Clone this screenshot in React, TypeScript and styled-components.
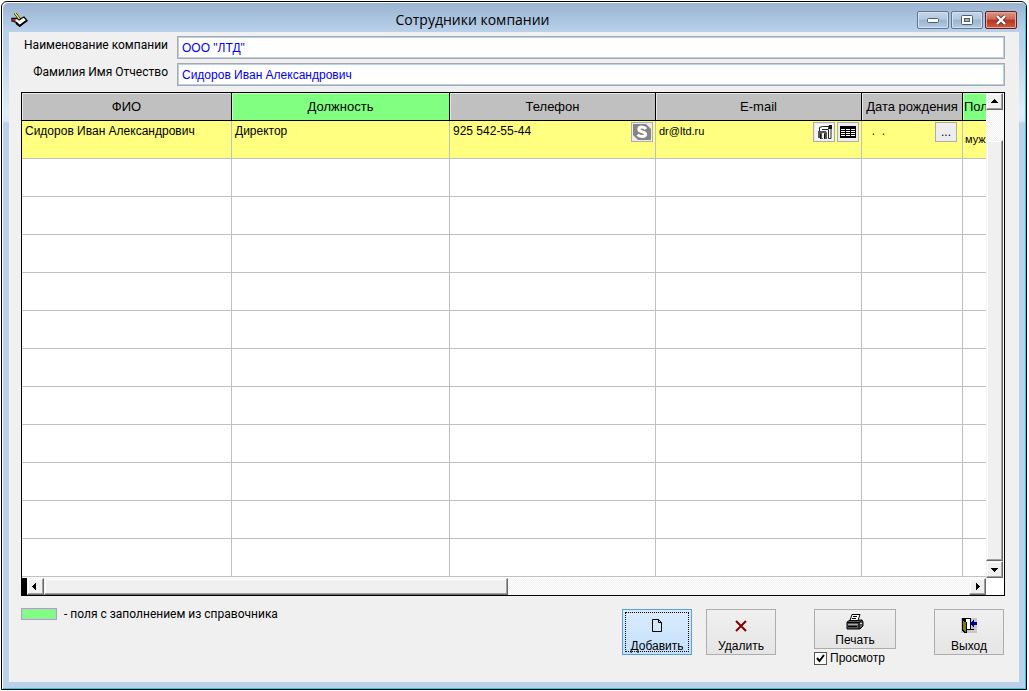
import React from 'react';
import styled, { createGlobalStyle, css } from 'styled-components';

const GlobalStyle = createGlobalStyle`
  * { box-sizing: border-box; }
  body {
    margin: 0;
    background: #fff;
    color: #000;
    font: 12px/16px 'Liberation Sans', Arial, sans-serif;
  }
  button, input { font: inherit; color: inherit; }
  svg { display: block; }
`;

const Desktop = styled.div`
  padding: 1px 2px 1px 1px;
`;

const Frame = styled.div`
  border: 1px solid #000;
  border-radius: 6px 6px 0 0;
  padding: 1px 0 0 1px;
  background: #fff;
`;

const FrameFill = styled.div`
  border-right: 1px solid #2cc8ee;
  border-bottom: 1px solid #2cc8ee;
  border-radius: 5px 5px 0 0;
  padding: 0 6px 6px;
  background: linear-gradient(#9ab4d1 0, #b9d1ea 29px, #b9d1ea 40px, #e2edf8 110px, #dce9f6 118px, #b9d1ea 120px);
`;

const TitleBar = styled.header`
  display: flex;
  align-items: center;
  height: 29px;
  padding: 4px 2px 0 2px;
`;

const Title = styled.h1`
  flex: 1;
  margin: 0;
  text-align: center;
  font: 400 14px/20px 'Open Sans', 'Noto Sans', sans-serif;
`;

const CaptionButtons = styled.div`
  display: flex;
  gap: 2px;
`;

const CaptionButton = styled.button<{ $danger?: boolean }>`
  display: flex;
  align-items: center;
  justify-content: center;
  width: 32px;
  height: 18px;
  padding: 0;
  border: 1px solid ${(p) => (p.$danger ? '#5a2226' : '#5f7590')};
  border-radius: 2px;
  box-shadow: inset 0 0 0 1px ${(p) => (p.$danger ? '#e6a99c' : '#d3e1f0')};
  background: ${(p) =>
    p.$danger
      ? 'linear-gradient(#dc9484 0, #cc6a56 45%, #b5341e 50%, #cc5c40 100%)'
      : 'linear-gradient(#c3d5e8 0, #b4c9df 45%, #9bb4cf 50%, #b3cbe4 100%)'};
`;

const Client = styled.main`
  padding: 4px 14px 16px 12px;
  background: #f0f0f0;
`;

const Form = styled.form`
  display: grid;
  grid-template-columns: 147px 1fr;
  gap: 4px 9px;
`;

const labelFont = css`
  font: 12px/16px Roboto, 'Liberation Sans', sans-serif;
`;

const FieldLabel = styled.label`
  ${labelFont}
  display: flex;
  justify-content: flex-end;
  padding-top: 1px;
  white-space: nowrap;
`;

const Field = styled.input`
  width: 100%;
  height: 23px;
  padding: 0 4px;
  border: 1px solid #a6a9ae;
  outline: 1px solid #b4d0ea;
  outline-offset: -2px;
  border-radius: 0;
  background: #fff;
  color: #0000ff;
`;

const Grid = styled.section`
  display: grid;
  grid-template-columns: minmax(0, 1fr) 18px;
  margin-top: 6px;
  border: 1px solid #000;
  background: #fff;
`;

const TableArea = styled.div`
  overflow: hidden;
  padding-bottom: 1px;
`;

const Table = styled.table`
  width: 100%;
  table-layout: fixed;
  border-collapse: separate;
  border-spacing: 0;
`;

const HeadCell = styled.th<{ $lookup?: boolean }>`
  height: 28px;
  padding: 0;
  border-right: 1px solid #000;
  border-bottom: 1px solid #000;
  box-shadow: inset 1px 1px 0 ${(p) => (p.$lookup ? '#c8ffc8' : '#e8e8e8')};
  background: ${(p) => (p.$lookup ? '#80ff80' : '#c0c0c0')};
  font-size: 13px;
  font-weight: 400;
  white-space: nowrap;
  overflow: hidden;
  &:last-child { border-right: 0; padding-left: 1px; text-align: left; }
`;

const Cell = styled.td<{ $selected?: boolean; $low?: boolean }>`
  height: 38px;
  padding: ${(p) => (p.$low ? '9px 0 0 2px' : '1px 2px 0 3px')};
  border-right: 1px solid #c0c0c0;
  border-bottom: 1px solid #c0c0c0;
  background: ${(p) => (p.$selected ? '#ffff80' : '#fff')};
  vertical-align: top;
  white-space: nowrap;
  overflow: hidden;
  font-size: ${(p) => (p.$low ? '11px' : '12px')};
  line-height: 18px;
  &:last-child { border-right: 0; }
`;

const CellLine = styled.div<{ $small?: boolean; $inset?: boolean }>`
  display: flex;
  gap: 2px;
  padding-right: ${(p) => (p.$inset ? '3px' : '0')};
  font-size: ${(p) => (p.$small ? '11px' : '12px')};
  & > span { flex: 1; }
`;

const CellButton = styled.button`
  display: flex;
  align-items: center;
  justify-content: center;
  width: 22px;
  height: 20px;
  padding: 0;
  border: 1px solid #adadad;
  background: #ededed;
`;

const VScroll = styled.div`
  display: flex;
  flex-direction: column;
  padding-right: 1px;
`;

const HScroll = styled.div`
  display: flex;
`;

const SplitBox = styled.div`
  width: 5px;
  background: #000;
`;

const raised = css`
  border: 1px solid;
  border-color: #f4f4f4 #696969 #696969 #f4f4f4;
  box-shadow: inset -1px -1px 0 #a0a0a0, inset 1px 1px 0 #fff;
  background: #f0f0f0;
`;

const ArrowButton = styled.button`
  ${raised}
  display: flex;
  align-items: center;
  justify-content: center;
  flex: none;
  width: 17px;
  height: 17px;
  padding: 0;
`;

const Thumb = styled.div<{ $grow: number }>`
  ${raised}
  flex: ${(p) => p.$grow} 1 0;
`;

const Track = styled.div<{ $grow: number }>`
  flex: ${(p) => p.$grow} 1 0;
  background: repeating-conic-gradient(#f0f0f0 0 25%, #fff 0 50%) 0 0 / 2px 2px;
`;

const Footer = styled.footer`
  display: flex;
  align-items: flex-start;
  justify-content: space-between;
  padding: 10px 1px 0 0;
`;

const Legend = styled.div`
  ${labelFont}
  display: flex;
  align-items: center;
  gap: 7px;
`;

const Swatch = styled.span`
  width: 36px;
  height: 12px;
  border: 1px solid #a6a9ae;
  outline: 1px solid #a9d6c8;
  outline-offset: -2px;
  background: #80ff80;
`;

const Actions = styled.div`
  display: flex;
  align-items: flex-start;
  gap: 38px;
  padding-top: 3px;
`;

const ActionPair = styled.div`
  display: flex;
  gap: 14px;
`;

const ActionButton = styled.button<{ $wide?: boolean; $focused?: boolean }>`
  display: flex;
  flex-direction: column;
  align-items: center;
  justify-content: flex-end;
  gap: ${(p) => (p.$wide ? '2px' : '5px')};
  width: ${(p) => (p.$wide ? '82px' : '70px')};
  height: ${(p) => (p.$wide ? '40px' : '46px')};
  padding: 0;
  border: 1px solid ${(p) => (p.$focused ? '#569de5' : '#adadad')};
  background: ${(p) => (p.$focused ? 'linear-gradient(#daecfc, #c4e0fc)' : 'linear-gradient(#f0f0f0, #e5e5e5)')};
  outline: ${(p) => (p.$focused ? '1px dotted #000' : '0')};
  outline-offset: -4px;
`;

const PrintGroup = styled.div`
  display: flex;
  flex-direction: column;
  gap: 1px;
`;

const CheckLabel = styled.label`
  display: flex;
  align-items: center;
  gap: 3px;
`;

const Check = styled.input`
  appearance: none;
  width: 13px;
  height: 13px;
  margin: 0;
  border: 1px solid #555;
  background: #fff;
  &:checked {
    background: #fff url("data:image/svg+xml,%3Csvg xmlns='http://www.w3.org/2000/svg' viewBox='0 0 11 11'%3E%3Cpath d='M2 5l2.5 3L9 2' fill='none' stroke='%23000' stroke-width='2'/%3E%3C/svg%3E");
  }
`;

const Arrow = ({ d }: { d: string }) => (
  <svg width="7" height="7" viewBox="0 0 7 7" shapeRendering="crispEdges">
    <path d={d} />
  </svg>
);

const AppIcon = () => (
  <svg width="17" height="14" viewBox="0 0 17 14">
    <path d="M1 5.500h5l2 1 5-2.500 3 3.500-3 2-4 3.500-4-4-4-1z" fill="#fff" stroke="#000" strokeWidth="1.300" />
    <path d="M5 10l3.500 3 4-3 3.500-2.500" fill="none" stroke="#000" strokeWidth="1.800" />
    <path d="M1.500 6h3v2.500h-3z" fill="#b02020" />
    <path d="M4 0l5 7" stroke="#000" strokeWidth="2.600" />
    <path d="M4 0l4.500 6" stroke="#ffe820" strokeWidth="1.500" />
  </svg>
);

const SkypeIcon = () => (
  <svg width="18" height="16" viewBox="0 0 18 16">
    <path d="M0 0h13l5 5v11H5l-5-5z" fill="#858585" />
    <path d="M13 5C11 2.400 5.800 2.400 5.800 5.300c0 3.200 6.800 2 6.800 5 0 3-6 3-8 .400" fill="none" stroke="#fff" strokeWidth="3" />
  </svg>
);

const MailIcon = () => (
  <svg width="18" height="16" viewBox="0 0 18 16">
    <rect width="18" height="16" fill="#f6f6f6" />
    <path d="M4.500 7V3.500l3-1h8.500v12h-2.500V5.500H7" fill="#fff" stroke="#222" />
    <path d="M14 1h3v4h-4z" fill="#111" />
    <path d="M3 7h8l1 2v6h-2v-5H8v5H6v-5H5v4H3z" fill="#555" />
    <path d="M5.500 10v5M9.500 10v5" stroke="#111" />
    <path d="M7 9h2v5H7z" fill="#eee" />
  </svg>
);

const TableIcon = () => (
  <svg width="18" height="14" viewBox="0 0 18 14" shapeRendering="crispEdges">
    <path d="M1 1h16v12H1z" />
    <path d="M2 4h4v1H2zM7 4h4v1H7zM12 4h4v1h-4zM2 6h4v1H2zM7 6h4v1H7zM12 6h4v1h-4zM2 8h4v1H2zM7 8h4v1H7zM12 8h4v1h-4zM2 10h4v1H2zM7 10h4v1H7zM12 10h4v1h-4z" fill="#fff" />
  </svg>
);

const PageIcon = () => (
  <svg width="12" height="14" viewBox="0 0 12 14">
    <path d="M1.500.500h6l3 3v9h-9zM7.500.500v3h3" fill="none" stroke="#000" />
  </svg>
);

const CrossIcon = () => (
  <svg width="12" height="14" viewBox="0 0 12 14">
    <path d="M1 2l10 10M11 2L1 12" stroke="#800000" strokeWidth="2" />
  </svg>
);

const PrinterIcon = () => (
  <svg width="18" height="16" viewBox="0 0 18 16">
    <path d="M1 8l3-2h12l1 2v4l-3 3H1z" fill="#555" stroke="#000" />
    <path d="M6 .500h8l-2 6H4z" fill="#fff" stroke="#000" />
    <path d="M7 2.500h4M6 4.500h4" stroke="#000" />
    <path d="M1 8.500h12l3-2M13 9v6M2 12.500h9" fill="none" stroke="#000" />
    <path d="M2 10.500h10" stroke="#aaa" />
    <path d="M14 9.500h2" stroke="#ddd" />
  </svg>
);

const ExitIcon = () => (
  <svg width="16" height="15" viewBox="0 0 16 15" shapeRendering="crispEdges">
    <path d="M0 0h16v15H0z" fill="#c8c8c8" />
    <path d="M1 0h9v12H1z" />
    <path d="M5 1h4v10H5z" fill="#fff" />
    <path d="M1 1l4 3v11l-4-3z" fill="#808000" stroke="#000" strokeWidth="1" />
    <path d="M9 11h4v1H9z" />
    <path d="M9 5l4-4v3h3v3h-3v3z" fill="#000090" />
  </svg>
);

interface Column {
  title: string;
  width?: number;
  lookup?: boolean;
}

const columns: Column[] = [
  { title: 'ФИО', width: 210 },
  { title: 'Должность', width: 218, lookup: true },
  { title: 'Телефон', width: 206 },
  { title: 'E-mail', width: 206 },
  { title: 'Дата рождения', width: 101 },
  { title: 'Пол', lookup: true },
];

const emptyRows = Array.from({ length: 11 }, (_, i) => i);

export default function App() {
  return (
    <Desktop>
      <GlobalStyle />
      <Frame>
        <FrameFill>
          <TitleBar>
            <AppIcon />
            <Title>Сотрудники компании</Title>
            <CaptionButtons>
              <CaptionButton aria-label="Свернуть">
                <svg width="12" height="6" viewBox="0 0 12 6"><rect x=".5" y="1.500" width="11" height="4" rx="1" fill="#fff" stroke="#4c5a6c" /></svg>
              </CaptionButton>
              <CaptionButton aria-label="Развернуть">
                <svg width="12" height="10" viewBox="0 0 12 10"><rect x=".5" y=".5" width="11" height="9" rx="1" fill="#fff" stroke="#4c5a6c" /><rect x="3.500" y="3.500" width="5" height="3" fill="#9bb4cf" stroke="#4c5a6c" /></svg>
              </CaptionButton>
              <CaptionButton $danger aria-label="Закрыть">
                <svg width="12" height="10" viewBox="0 0 12 10"><path d="M2 1l8 8M10 1L2 9" stroke="#5a3038" strokeWidth="4" /><path d="M2 1l8 8M10 1L2 9" stroke="#fff" strokeWidth="2.400" /></svg>
              </CaptionButton>
            </CaptionButtons>
          </TitleBar>
          <Client>
            <Form>
              <FieldLabel htmlFor="company">Наименование компании</FieldLabel>
              <Field id="company" defaultValue={'ООО "ЛТД"'} />
              <FieldLabel htmlFor="person">Фамилия Имя Отчество</FieldLabel>
              <Field id="person" defaultValue="Сидоров Иван Александрович" />
            </Form>
            <Grid>
              <TableArea>
                <Table>
                  <colgroup>
                    {columns.map((c) => <col key={c.title} width={c.width} />)}
                  </colgroup>
                  <thead>
                    <tr>
                      {columns.map((c) => <HeadCell key={c.title} $lookup={c.lookup}>{c.title}</HeadCell>)}
                    </tr>
                  </thead>
                  <tbody>
                    <tr>
                      <Cell $selected>Сидоров Иван Александрович</Cell>
                      <Cell $selected>Директор</Cell>
                      <Cell $selected>
                        <CellLine>
                          <span>925 542-55-44</span>
                          <CellButton aria-label="Skype"><SkypeIcon /></CellButton>
                        </CellLine>
                      </Cell>
                      <Cell $selected>
                        <CellLine $small>
                          <span>dr@ltd.ru</span>
                          <CellButton aria-label="Письмо"><MailIcon /></CellButton>
                          <CellButton aria-label="Список"><TableIcon /></CellButton>
                        </CellLine>
                      </Cell>
                      <Cell $selected>
                        <CellLine $inset>
                          <span>&nbsp;&nbsp;.&nbsp;&nbsp;.</span>
                          <CellButton aria-label="Выбрать дату">...</CellButton>
                        </CellLine>
                      </Cell>
                      <Cell $selected $low>муж</Cell>
                    </tr>
                    {emptyRows.map((row) => (
                      <tr key={row}>
                        {columns.map((c) => <Cell key={c.title} />)}
                      </tr>
                    ))}
                  </tbody>
                </Table>
              </TableArea>
              <VScroll>
                <ArrowButton aria-label="Вверх"><Arrow d="M0 5h7L3.500 1z" /></ArrowButton>
                <Track $grow={30} />
                <Thumb $grow={421} />
                <ArrowButton aria-label="Вниз"><Arrow d="M0 2h7L3.500 6z" /></ArrowButton>
              </VScroll>
              <HScroll>
                <SplitBox />
                <ArrowButton aria-label="Влево"><Arrow d="M4 0v7L0 3.500z" /></ArrowButton>
                <Thumb $grow={463} />
                <Track $grow={463} />
                <ArrowButton aria-label="Вправо"><Arrow d="M2 0v7l4-3.500z" /></ArrowButton>
              </HScroll>
            </Grid>
            <Footer>
              <Legend>
                <Swatch />
                <span>- поля с заполнением из справочника</span>
              </Legend>
              <Actions>
                <ActionPair>
                  <ActionButton $focused><PageIcon />Добавить</ActionButton>
                  <ActionButton><CrossIcon />Удалить</ActionButton>
                </ActionPair>
                <PrintGroup>
                  <ActionButton $wide><PrinterIcon />Печать</ActionButton>
                  <CheckLabel><Check type="checkbox" defaultChecked />Просмотр</CheckLabel>
                </PrintGroup>
                <ActionButton><ExitIcon />Выход</ActionButton>
              </Actions>
            </Footer>
          </Client>
        </FrameFill>
      </Frame>
    </Desktop>
  );
}
